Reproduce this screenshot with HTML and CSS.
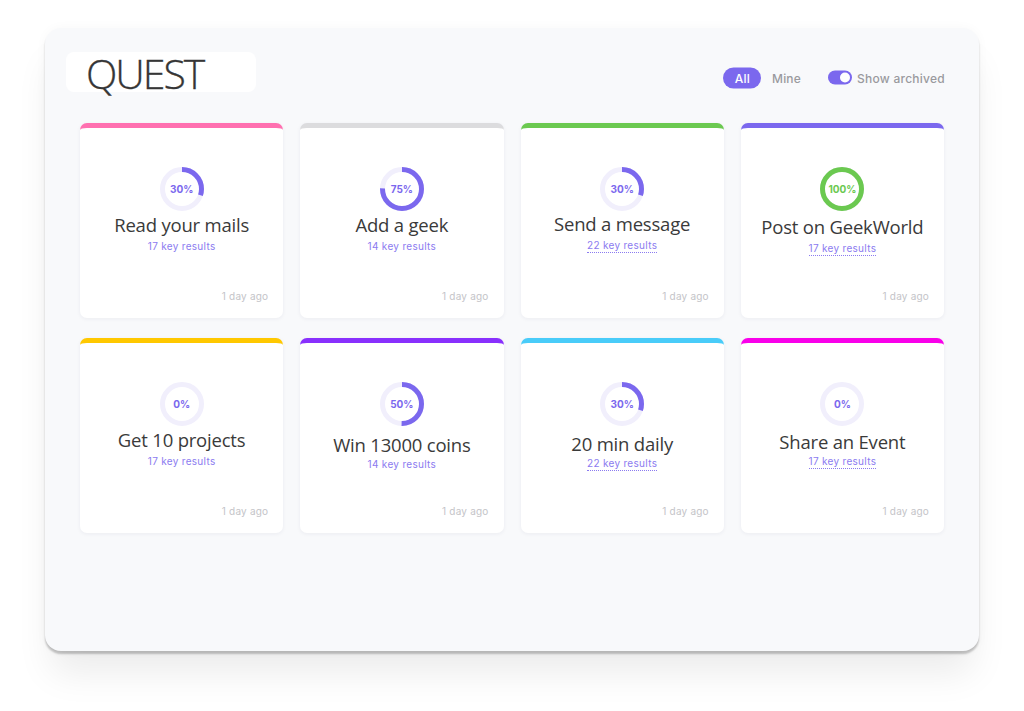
FILE: index.html
```html
<!DOCTYPE html>
<html lang="en">
<head>
<meta charset="utf-8">
<title>Quest</title>
<link rel="stylesheet" href="styles.css">
</head>
<body>
<div class="panel">
  <header class="header">
    <div class="title-box"><h1 class="title">QUEST</h1></div>
    <div class="controls">
      <span class="pill pill-active">All</span>
      <span class="pill">Mine</span>
      <span class="switch"><span class="knob"></span></span>
      <span class="switch-label">Show archived</span>
    </div>
  </header>

  <main class="grid">
    <article class="card c-pink">
      <svg class="ring" viewBox="0 0 44 44"><circle class="track" cx="22" cy="22" r="19.5"/><circle class="bar" cx="22" cy="22" r="19.5" stroke-dasharray="36.8 122.5"/></svg>
      <span class="pct">30%</span>
      <h2 class="name">Read your mails</h2>
      <span class="keys">17 key results</span>
      <span class="ago">1 day ago</span>
    </article>
    <article class="card c-gray">
      <svg class="ring" viewBox="0 0 44 44"><circle class="track" cx="22" cy="22" r="19.5"/><circle class="bar" cx="22" cy="22" r="19.5" stroke-dasharray="91.9 122.5"/></svg>
      <span class="pct">75%</span>
      <h2 class="name">Add a geek</h2>
      <span class="keys">14 key results</span>
      <span class="ago">1 day ago</span>
    </article>
    <article class="card c-green">
      <svg class="ring" viewBox="0 0 44 44"><circle class="track" cx="22" cy="22" r="19.5"/><circle class="bar" cx="22" cy="22" r="19.5" stroke-dasharray="36.8 122.5"/></svg>
      <span class="pct">30%</span>
      <h2 class="name up1">Send a message</h2>
      <span class="keys dotted">22 key results</span>
      <span class="ago">1 day ago</span>
    </article>
    <article class="card c-purple">
      <svg class="ring done" viewBox="0 0 44 44"><circle class="track" cx="22" cy="22" r="19.5"/><circle class="bar" cx="22" cy="22" r="19.5" stroke-dasharray="122.5 122.5"/></svg>
      <span class="pct pct-done">100%</span>
      <h2 class="name down2">Post on GeekWorld</h2>
      <span class="keys dotted">17 key results</span>
      <span class="ago">1 day ago</span>
    </article>

    <article class="card c-yellow">
      <svg class="ring" viewBox="0 0 44 44"><circle class="track" cx="22" cy="22" r="19.5"/></svg>
      <span class="pct">0%</span>
      <h2 class="name">Get 10 projects</h2>
      <span class="keys">17 key results</span>
      <span class="ago">1 day ago</span>
    </article>
    <article class="card c-violet">
      <svg class="ring" viewBox="0 0 44 44"><circle class="track" cx="22" cy="22" r="19.5"/><circle class="bar" cx="22" cy="22" r="19.5" stroke-dasharray="61.3 122.5"/></svg>
      <span class="pct">50%</span>
      <h2 class="name down5">Win 13000 coins</h2>
      <span class="keys tight">14 key results</span>
      <span class="ago">1 day ago</span>
    </article>
    <article class="card c-blue">
      <svg class="ring" viewBox="0 0 44 44"><circle class="track" cx="22" cy="22" r="19.5"/><circle class="bar" cx="22" cy="22" r="19.5" stroke-dasharray="36.8 122.5"/></svg>
      <span class="pct">30%</span>
      <h2 class="name down4">20 min daily</h2>
      <span class="keys dotted tight">22 key results</span>
      <span class="ago">1 day ago</span>
    </article>
    <article class="card c-magenta">
      <svg class="ring" viewBox="0 0 44 44"><circle class="track" cx="22" cy="22" r="19.5"/></svg>
      <span class="pct">0%</span>
      <h2 class="name down2">Share an Event</h2>
      <span class="keys dotted tight">17 key results</span>
      <span class="ago">1 day ago</span>
    </article>
  </main>
</div>
</body>
</html>
```

FILE: styles.css
```css
* { box-sizing: border-box; }

html, body { margin: 0; background: #ffffff; }

body {
  min-height: 100vh;
  padding: 28px 45px 0 45px;
  font-family: "Open Sans", "Noto Sans", sans-serif;
}

.panel {
  height: 623px;
  background: #f8f9fb;
  border-radius: 16px;
  padding: 24px 35px 0 35px;
  box-shadow: 0 3px 2px rgba(0, 0, 0, 0.22), 0 28px 36px -6px rgba(0, 0, 0, 0.08), 0 0 12px rgba(0, 0, 0, 0.03);
}

.header {
  display: flex;
  align-items: center;
  justify-content: space-between;
  height: 40px;
  margin-left: -14px;
  margin-right: -1px;
}

.title-box {
  width: 190px;
  height: 40px;
  background: #ffffff;
  border-radius: 8px;
  padding-left: 20px;
  display: flex;
  align-items: center;
}

.title {
  margin: 0;
  font-family: "Open Sans", sans-serif;
  font-weight: 300;
  font-size: 41px;
  letter-spacing: -2px;
  line-height: 40px;
  color: #363636;
  -webkit-text-stroke: 0.3px #363636;
  transform: translateY(1px);
}

.controls {
  display: flex;
  align-items: center;
  font-family: Inter, "Noto Sans", sans-serif;
  font-size: 12px;
  transform: translateY(5.5px);
}

.pill {
  height: 21px;
  line-height: 21px;
  padding: 0 11px;
  border-radius: 11px;
  color: #9a9a9e;
  font-weight: 500;
  letter-spacing: 0.2px;
}

.pill-active {
  background: #7b68ee;
  color: #ffffff;
  padding: 0 11px 0 12px;
  margin-right: 0;
}

.switch {
  width: 24px;
  height: 14px;
  margin-left: 16px;
  border-radius: 7px;
  background: #7b68ee;
  display: flex;
  align-items: center;
  justify-content: flex-end;
  padding-right: 2px;
}

.knob {
  width: 10px;
  height: 10px;
  border-radius: 50%;
  background: #ffffff;
}

.switch-label {
  margin-left: 5px;
  color: #9a9a9e;
  font-weight: 500;
  letter-spacing: 0.25px;
}

.grid {
  margin-top: 31px;
  display: grid;
  grid-template-columns: repeat(4, 1fr);
  column-gap: 17px;
  row-gap: 20px;
}

.card {
  position: relative;
  height: 195px;
  background: #ffffff;
  border-radius: 7px;
  border-top: 5px solid #ccc;
  box-shadow: 0 1px 4px rgba(40, 40, 80, 0.06);
  display: flex;
  flex-direction: column;
  align-items: center;
  padding: 39px 15px 15px 15px;
}

.c-pink { border-top-color: #ff70b0; }
.c-gray { border-top-color: #dcdcde; }
.c-green { border-top-color: #6bc950; }
.c-purple { border-top-color: #7b68ee; }
.c-yellow { border-top-color: #ffc800; }
.c-violet { border-top-color: #8930fd; }
.c-blue { border-top-color: #49ccf9; }
.c-magenta { border-top-color: #f900ea; }

.ring {
  width: 44px;
  height: 44px;
  transform: rotate(-90deg);
  flex: none;
}

.ring circle {
  fill: none;
  stroke-width: 5;
}

.ring .track { stroke: #f1effc; }
.ring .bar { stroke: #7b68ee; }
.ring.done .bar { stroke: #6bc950; }

.pct {
  position: absolute;
  top: 39px;
  left: 0;
  right: 0;
  height: 44px;
  line-height: 44px;
  text-align: center;
  font-family: Inter, "Noto Sans", sans-serif;
  font-weight: 700;
  font-size: 10px;
  color: #7b68ee;
}

.pct-done { color: #6bc950; }

.name {
  margin: 2px 0 0 0;
  font-family: "Open Sans", sans-serif;
  font-weight: 400;
  font-size: 18.5px;
  line-height: 24px;
  color: #3a3a3a;
  letter-spacing: -0.2px;
  white-space: nowrap;
}

.up1 { margin-top: 1px; }
.down2 { margin-top: 4px; }
.down4 { margin-top: 6px; }
.down5 { margin-top: 7px; }

.keys {
  margin-top: 3px;
  font-family: Inter, "Noto Sans", sans-serif;
  font-size: 10px;
  line-height: 13px;
  letter-spacing: 0.3px;
  color: #8b7bf0;
}

.keys.tight { margin-top: 1px; }

.dotted {
  border-bottom: 1px dotted #8b7bf0;
}

.ago {
  margin-top: auto;
  align-self: flex-end;
  font-family: Inter, "Noto Sans", sans-serif;
  font-size: 10px;
  line-height: 14px;
  letter-spacing: 0.2px;
  color: #c4c4c8;
}
```
